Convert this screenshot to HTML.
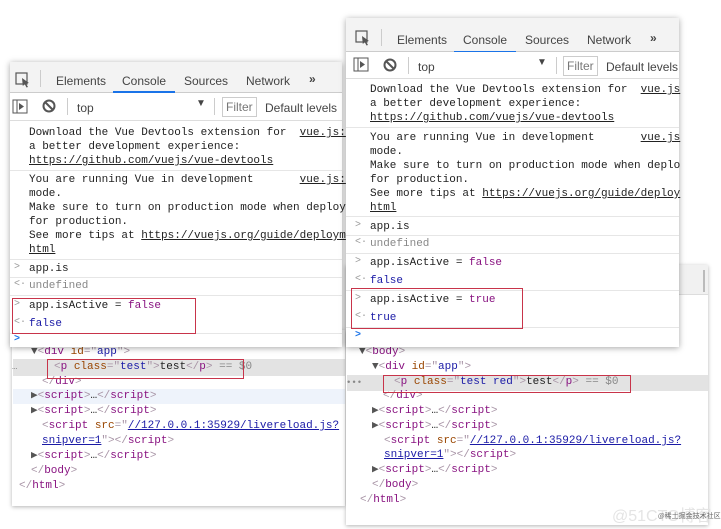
<!DOCTYPE html>
<html><head><meta charset="utf-8"><style>
*{margin:0;padding:0;box-sizing:border-box}
body{width:721px;height:529px;background:#fff;position:relative;overflow:hidden;font-family:"Liberation Sans",sans-serif}
.p{position:absolute;background:#fff}
.sh{box-shadow:0 1px 6px rgba(0,0,0,.35)}
.m{position:absolute;font-family:"Liberation Mono",monospace;font-size:11px;line-height:14px;white-space:pre;color:#222}
.s{position:absolute;font-size:12px;color:#444;white-space:pre}
.u{text-decoration:underline}
.g{color:#888}
.t{color:#a894a6}.n{color:#881280}.a{color:#994500}.v{color:#1a1aa6}
.kw{color:#881280}
.box{position:absolute;border:1.5px solid #c8344a}
.hr{position:absolute;height:1px;background:#e6e6e6}
.ar{position:absolute;font-size:10px;color:#999;font-family:"Liberation Mono",monospace}
</style></head><body>

<!-- left elements panel -->
<div class="p" style="left:12px;top:330px;width:333px;height:176px;box-shadow:0 1px 4px rgba(0,0,0,.3)"></div>
<div style="position:absolute;left:13px;top:359px;width:332px;height:17px;background:#e3e3e3"></div>
<div class="m g" style="left:12px;top:360px;font-size:9px">…</div>
<div class="m" style="left:31px;top:345px"><span style="color:#555">▼</span><span class="t">&lt;</span><span class="n">div</span> <span class="a">id</span><span class="t">="</span><span class="v">app</span><span class="t">"&gt;</span></div>
<div class="m" style="left:54px;top:360px"><span class="t">&lt;</span><span class="n">p</span> <span class="a">class</span><span class="t">="</span><span class="v">test</span><span class="t">"&gt;</span>test<span class="t">&lt;/</span><span class="n">p</span><span class="t">&gt;</span> <span class="g">== $0</span></div>
<div class="m" style="left:42px;top:375px"><span class="t">&lt;/</span><span class="n">div</span><span class="t">&gt;</span></div>
<div style="position:absolute;left:13px;top:389px;width:332px;height:15px;background:#eef3fb"></div>
<div class="m" style="left:31px;top:389px"><span style="color:#555">▶</span><span class="t">&lt;</span><span class="n">script</span><span class="t">&gt;</span>…<span class="t">&lt;/</span><span class="n">script</span><span class="t">&gt;</span></div>
<div class="m" style="left:31px;top:404px"><span style="color:#555">▶</span><span class="t">&lt;</span><span class="n">script</span><span class="t">&gt;</span>…<span class="t">&lt;/</span><span class="n">script</span><span class="t">&gt;</span></div>
<div class="m" style="left:42px;top:419px"><span class="t">&lt;</span><span class="n">script</span> <span class="a">src</span><span class="t">="</span><span class="v u">//127.0.0.1:35929/livereload.js?</span></div>
<div class="m" style="left:42px;top:434px"><span class="v u">snipver=1</span><span class="t">"&gt;&lt;/</span><span class="n">script</span><span class="t">&gt;</span></div>
<div class="m" style="left:31px;top:449px"><span style="color:#555">▶</span><span class="t">&lt;</span><span class="n">script</span><span class="t">&gt;</span>…<span class="t">&lt;/</span><span class="n">script</span><span class="t">&gt;</span></div>
<div class="m" style="left:31px;top:464px"><span class="t">&lt;/</span><span class="n">body</span><span class="t">&gt;</span></div>
<div class="m" style="left:19px;top:479px"><span class="t">&lt;/</span><span class="n">html</span><span class="t">&gt;</span></div>
<div class="box" style="left:47px;top:359px;width:197px;height:20px"></div>

<!-- left console -->
<div class="p sh" style="left:10px;top:62px;width:332px;height:285px"></div>
<div style="position:absolute;left:10px;top:62px;width:332px;height:31px;background:#f3f3f3;border-bottom:1px solid #ccc"></div>
<svg style="position:absolute;left:15px;top:72px" width="16" height="16"><rect x="1" y="1" width="11" height="11" fill="none" stroke="#555" stroke-width="1.2"/><path d="M7 6 L14 11 L11 11.5 L13 15 L11.5 15.5 L9.8 12.2 L7.8 14 Z" fill="#555"/></svg>
<div style="position:absolute;left:40px;top:70px;width:1px;height:17px;background:#ccc"></div>
<div class="s" style="left:56px;top:74px">Elements</div>
<div class="s" style="left:122px;top:74px">Console</div>
<div style="position:absolute;left:113px;top:91px;width:62px;height:2px;background:#1a73e8"></div>
<div class="s" style="left:184px;top:74px">Sources</div>
<div class="s" style="left:246px;top:74px">Network</div>
<div class="s" style="left:309px;top:72px;font-weight:bold">»</div>
<div style="position:absolute;left:10px;top:93px;width:332px;height:28px;background:#fff;border-bottom:1px solid #ddd"></div>
<svg style="position:absolute;left:12px;top:99px" width="16" height="16"><rect x="1" y="1" width="14" height="13" fill="none" stroke="#555"/><line x1="5" y1="1" x2="5" y2="14" stroke="#555"/><path d="M7 4 L12 7.5 L7 11 Z" fill="#555"/></svg>
<svg style="position:absolute;left:42px;top:99px" width="14" height="14"><circle cx="7" cy="7" r="5.5" fill="none" stroke="#555" stroke-width="2"/><line x1="3" y1="3" x2="11" y2="11" stroke="#555" stroke-width="2"/></svg>
<div style="position:absolute;left:67px;top:98px;width:1px;height:17px;background:#ccc"></div>
<div class="s" style="left:77px;top:101px">top</div>
<div class="s" style="left:196px;top:98px;font-size:10px">▼</div>
<div style="position:absolute;left:214px;top:98px;width:1px;height:17px;background:#ccc"></div>
<div class="s" style="left:222px;top:97px;border:1px solid #ccc;padding:2px 3px;color:#777">Filter</div>
<div class="s" style="left:265px;top:101px">Default levels</div>
<div class="m" style="left:29px;top:126px">Download the Vue Devtools extension for  <span class="u">vue.js:</span>
a better development experience:
<span class="u">https://github.com/vuejs/vue-devtools</span></div>
<div class="hr" style="left:10px;top:170px;width:332px"></div>
<div class="m" style="left:29px;top:173px">You are running Vue in development       <span class="u">vue.js:</span>
mode.
Make sure to turn on production mode when deploy
for production.
See more tips at <span class="u">https://vuejs.org/guide/deploym</span>
<span class="u">html</span></div>
<div class="hr" style="left:10px;top:259px;width:332px"></div>
<div class="ar" style="left:14px;top:262px">&gt;</div>
<div class="m" style="left:29px;top:262px">app.is</div>
<div class="hr" style="left:10px;top:277px;width:332px"></div>
<div class="ar" style="left:14px;top:279px">&lt;·</div>
<div class="m g" style="left:29px;top:279px">undefined</div>
<div class="hr" style="left:10px;top:295px;width:332px"></div>
<div class="ar" style="left:14px;top:299px">&gt;</div>
<div class="m" style="left:29px;top:299px">app.isActive = <span class="kw">false</span></div>
<div class="ar" style="left:14px;top:317px">&lt;·</div>
<div class="m" style="left:29px;top:317px;color:#1a1aa6">false</div>
<div class="hr" style="left:10px;top:333px;width:332px"></div>
<div class="ar" style="left:14px;top:334px;color:#1a73e8;font-weight:bold">&gt;</div>
<div class="box" style="left:12px;top:298px;width:184px;height:36px"></div>

<!-- right elements panel -->
<div class="p" style="left:346px;top:265px;width:362px;height:260px;box-shadow:0 1px 4px rgba(0,0,0,.3)"></div>
<div style="position:absolute;left:346px;top:265px;width:362px;height:30px;background:#f1f1f1;border-bottom:1px solid #ddd"></div>
<div style="position:absolute;left:703px;top:270px;width:2px;height:22px;background:#bbb"></div>
<div style="position:absolute;left:347px;top:375px;width:361px;height:16px;background:#e3e3e3"></div>
<div class="m g" style="left:346px;top:376px;font-size:9px">•••</div>
<div class="m" style="left:359px;top:345px"><span style="color:#555">▼</span><span class="t">&lt;</span><span class="n">body</span><span class="t">&gt;</span></div>
<div class="m" style="left:372px;top:360px"><span style="color:#555">▼</span><span class="t">&lt;</span><span class="n">div</span> <span class="a">id</span><span class="t">="</span><span class="v">app</span><span class="t">"&gt;</span></div>
<div class="m" style="left:394px;top:375px"><span class="t">&lt;</span><span class="n">p</span> <span class="a">class</span><span class="t">="</span><span class="v">test red</span><span class="t">"&gt;</span>test<span class="t">&lt;/</span><span class="n">p</span><span class="t">&gt;</span> <span class="g">== $0</span></div>
<div class="m" style="left:383px;top:389px"><span class="t">&lt;/</span><span class="n">div</span><span class="t">&gt;</span></div>
<div class="m" style="left:372px;top:404px"><span style="color:#555">▶</span><span class="t">&lt;</span><span class="n">script</span><span class="t">&gt;</span>…<span class="t">&lt;/</span><span class="n">script</span><span class="t">&gt;</span></div>
<div class="m" style="left:372px;top:419px"><span style="color:#555">▶</span><span class="t">&lt;</span><span class="n">script</span><span class="t">&gt;</span>…<span class="t">&lt;/</span><span class="n">script</span><span class="t">&gt;</span></div>
<div class="m" style="left:384px;top:434px"><span class="t">&lt;</span><span class="n">script</span> <span class="a">src</span><span class="t">="</span><span class="v u">//127.0.0.1:35929/livereload.js?</span></div>
<div class="m" style="left:384px;top:448px"><span class="v u">snipver=1</span><span class="t">"&gt;&lt;/</span><span class="n">script</span><span class="t">&gt;</span></div>
<div class="m" style="left:372px;top:463px"><span style="color:#555">▶</span><span class="t">&lt;</span><span class="n">script</span><span class="t">&gt;</span>…<span class="t">&lt;/</span><span class="n">script</span><span class="t">&gt;</span></div>
<div class="m" style="left:372px;top:478px"><span class="t">&lt;/</span><span class="n">body</span><span class="t">&gt;</span></div>
<div class="m" style="left:360px;top:493px"><span class="t">&lt;/</span><span class="n">html</span><span class="t">&gt;</span></div>
<div class="box" style="left:383px;top:375px;width:248px;height:18px"></div>
<div style="position:absolute;left:612px;top:502px;font-size:16px;color:#e4e4e4">@51CTO博客</div>
<div style="position:absolute;left:658px;top:511px;font-size:7px;color:#666;font-family:'Noto Sans CJK SC',sans-serif">@稀土掘金技术社区</div>

<!-- right console -->
<div class="p sh" style="left:346px;top:18px;width:333px;height:329px"></div>
<div style="position:absolute;left:346px;top:18px;width:333px;height:34px;background:#f3f3f3;border-bottom:1px solid #ccc"></div>
<svg style="position:absolute;left:355px;top:30px" width="16" height="16"><rect x="1" y="1" width="11" height="11" fill="none" stroke="#555" stroke-width="1.2"/><path d="M7 6 L14 11 L11 11.5 L13 15 L11.5 15.5 L9.8 12.2 L7.8 14 Z" fill="#555"/></svg>
<div style="position:absolute;left:381px;top:29px;width:1px;height:17px;background:#ccc"></div>
<div class="s" style="left:397px;top:33px">Elements</div>
<div class="s" style="left:463px;top:33px">Console</div>
<div style="position:absolute;left:454px;top:51px;width:62px;height:2px;background:#1a73e8"></div>
<div class="s" style="left:525px;top:33px">Sources</div>
<div class="s" style="left:587px;top:33px">Network</div>
<div class="s" style="left:650px;top:31px;font-weight:bold">»</div>
<div style="position:absolute;left:346px;top:52px;width:333px;height:27px;background:#fff;border-bottom:1px solid #ddd"></div>
<svg style="position:absolute;left:353px;top:57px" width="16" height="16"><rect x="1" y="1" width="14" height="13" fill="none" stroke="#555"/><line x1="5" y1="1" x2="5" y2="14" stroke="#555"/><path d="M7 4 L12 7.5 L7 11 Z" fill="#555"/></svg>
<svg style="position:absolute;left:383px;top:58px" width="14" height="14"><circle cx="7" cy="7" r="5.5" fill="none" stroke="#555" stroke-width="2"/><line x1="3" y1="3" x2="11" y2="11" stroke="#555" stroke-width="2"/></svg>
<div style="position:absolute;left:408px;top:57px;width:1px;height:17px;background:#ccc"></div>
<div class="s" style="left:418px;top:60px">top</div>
<div class="s" style="left:537px;top:57px;font-size:10px">▼</div>
<div style="position:absolute;left:556px;top:57px;width:1px;height:17px;background:#ccc"></div>
<div class="s" style="left:563px;top:56px;border:1px solid #ccc;padding:2px 3px;color:#777">Filter</div>
<div class="s" style="left:606px;top:60px">Default levels</div>
<div class="m" style="left:370px;top:83px">Download the Vue Devtools extension for  <span class="u">vue.js</span>
a better development experience:
<span class="u">https://github.com/vuejs/vue-devtools</span></div>
<div class="hr" style="left:346px;top:127px;width:333px"></div>
<div class="m" style="left:370px;top:131px">You are running Vue in development       <span class="u">vue.js</span>
mode.
Make sure to turn on production mode when deplo
for production.
See more tips at <span class="u">https://vuejs.org/guide/deploy</span>
<span class="u">html</span></div>
<div class="hr" style="left:346px;top:216px;width:333px"></div>
<div class="ar" style="left:355px;top:220px">&gt;</div>
<div class="m" style="left:370px;top:220px">app.is</div>
<div class="hr" style="left:346px;top:235px;width:333px"></div>
<div class="ar" style="left:355px;top:237px">&lt;·</div>
<div class="m g" style="left:370px;top:237px">undefined</div>
<div class="hr" style="left:346px;top:253px;width:333px"></div>
<div class="ar" style="left:355px;top:256px">&gt;</div>
<div class="m" style="left:370px;top:256px">app.isActive = <span class="kw">false</span></div>
<div class="ar" style="left:355px;top:274px">&lt;·</div>
<div class="m" style="left:370px;top:274px;color:#1a1aa6">false</div>
<div class="hr" style="left:346px;top:290px;width:333px"></div>
<div class="ar" style="left:355px;top:293px">&gt;</div>
<div class="m" style="left:370px;top:293px">app.isActive = <span class="kw">true</span></div>
<div class="ar" style="left:355px;top:311px">&lt;·</div>
<div class="m" style="left:370px;top:311px;color:#1a1aa6">true</div>
<div class="hr" style="left:346px;top:327px;width:333px"></div>
<div class="ar" style="left:355px;top:330px;color:#1a73e8;font-weight:bold">&gt;</div>
<div class="box" style="left:351px;top:288px;width:172px;height:41px"></div>
</body></html>
